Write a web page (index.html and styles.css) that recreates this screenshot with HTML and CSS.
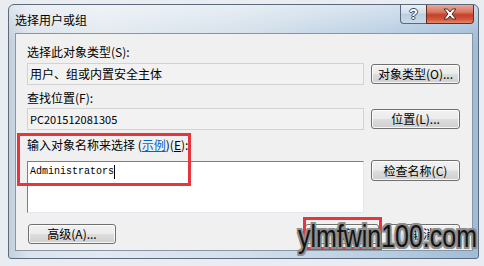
FILE: index.html
```html
<!DOCTYPE html>
<html>
<head>
<meta charset="utf-8">
<link rel="stylesheet" href="styles.css">
</head>
<body>
<div class="window">
  <div class="titlebar">
    <span class="title">选择用户或组</span>
    <div class="caption">
      <span class="cap help"><span class="q">?</span></span>
      <span class="cap close">
        <svg width="16" height="12" viewBox="0 0 16 12"><path d="M2 1 L5.5 1 L8 4 L10.5 1 L14 1 L10 6 L14 11 L10.5 11 L8 8 L5.5 11 L2 11 L6 6 Z" fill="#fff" stroke="#4a2a22" stroke-width="1" stroke-linejoin="round"/></svg>
      </span>
    </div>
  </div>
  <div class="client">
    <div class="label">选择此对象类型(S):</div>
    <div class="field">用户、组或内置安全主体</div>
    <button class="btn side">对象类型(O)...</button>

    <div class="label l2">查找位置(F):</div>
    <div class="field f2 num">PC201512081305</div>
    <button class="btn side">位置(L)...</button>

    <div class="label l3">输入对象名称来选择 (<span class="link">示例</span>)(<u>E</u>):</div>
    <div class="textarea"><span class="mono">Administrators</span><span class="caret"></span></div>
    <button class="btn side top">检查名称(C)</button>

    <div class="bottom">
      <button class="btn adv">高级(A)...</button>
      <div class="okcancel">
        <button class="btn dlg">确定</button>
        <button class="btn dlg">取消</button>
      </div>
    </div>
  </div>
</div>
<div class="mark mark1"></div>
<div class="mark mark2"></div>
<div class="wm">ylmfwin100.com</div>
</body>
</html>
```
FILE: styles.css
```css
html, body {
  margin: 0;
  padding: 0;
}
body {
  background: #e9edf1;
  width: 484px;
  height: 266px;
  position: relative;
  overflow: hidden;
  font-family: "Noto Sans CJK SC", "Liberation Sans", sans-serif;
  font-size: 12px;
  color: #000;
}
.window {
  box-sizing: border-box;
  margin: 4px 0 0 8px;
  width: 471px;
  height: 255px;
  border: 1px solid #5c6b7c;
  border-radius: 6px 6px 3px 3px;
  padding: 0 5px 7px 6px;
  display: flex;
  flex-direction: column;
  background:
    linear-gradient(180deg, rgba(255,255,255,0.45) 0px, rgba(255,255,255,0.1) 26px, rgba(255,255,255,0) 40px),
    linear-gradient(90deg, #c3cfdc 0%, #dbe3ec 4%, #e2e9f0 20%, #d3dfea 50%, #b7cde2 80%, #9fbcd8 100%);
}
.titlebar {
  height: 28px;
  display: flex;
  justify-content: space-between;
  align-items: flex-start;
}
.title {
  margin-top: 6px;
  line-height: 18px;
  font-size: 12px;
  color: #000;
}
.caption {
  display: flex;
  margin-right: -1px;
}
.cap {
  height: 18px;
  display: flex;
  align-items: center;
  justify-content: center;
  border: 1px solid #5a6a7c;
  border-top: none;
}
.help {
  width: 25px;
  border-radius: 0 0 0 4px;
  border-right: none;
  background: linear-gradient(180deg, #e7eef5 0%, #d3dfea 45%, #bccfe0 50%, #c9dbea 100%);
}
.q {
  font-family: "Liberation Sans", sans-serif;
  font-weight: bold;
  font-size: 14px;
  line-height: 14px;
  color: #fff;
  text-shadow: 1px 0 0 #3d4b5a, -1px 0 0 #3d4b5a, 0 1px 0 #3d4b5a, 0 -1px 0 #3d4b5a;
}
.close {
  width: 46px;
  border-radius: 0 0 4px 0;
  border-color: #6b2b20;
  background: linear-gradient(180deg, #e9a89a 0%, #d8745f 40%, #c5402a 55%, #d4573f 80%, #e48a6e 100%);
}
.client {
  box-sizing: border-box;
  height: 218px;
  border: 1px solid #8895a4;
  background: #f0f0f0;
  padding: 11px 12px 0 11px;
  display: grid;
  grid-template-columns: 337px 89px;
  column-gap: 7px;
  align-content: start;
}
.label {
  grid-column: 1 / -1;
  height: 14px;
  line-height: 14px;
  white-space: nowrap;
}
.l2 { margin-top: 6px; }
.l3 { margin-top: 8px; }
.link {
  color: #0066cc;
  text-decoration: underline;
}
.field {
  grid-column: 1;
  box-sizing: border-box;
  height: 22px;
  margin-top: 4px;
  border: 1px solid #d2d2d2;
  background: #f2f2f2;
  padding-left: 2px;
  line-height: 20px;
  color: #000;
}
.f2 { margin-top: 3px; }
.num { font-size: 11px; }
.textarea {
  grid-column: 1;
  box-sizing: border-box;
  height: 52px;
  margin-top: 9px;
  background: #fff;
  border: 1px solid;
  border-color: #7e7e7e #e3e6ea #e3e9ef #7e7e7e;
  padding: 2px 0 0 2px;
  display: flex;
  align-items: flex-start;
}
.mono {
  font-family: "Liberation Mono", monospace;
  font-size: 10px;
  line-height: 14px;
  margin-top: 1px;
}
.caret {
  width: 1px;
  height: 14px;
  background: #000;
  margin-top: 1px;
}
.btn {
  box-sizing: border-box;
  height: 20px;
  padding: 0;
  border: 1px solid #707070;
  border-radius: 3px;
  background: linear-gradient(180deg, #f2f2f2 0%, #ebebeb 48%, #dddddd 52%, #cfcfcf 100%);
  box-shadow: inset 0 0 0 1px rgba(255,255,255,0.8);
  font-family: "Noto Sans CJK SC", "Liberation Sans", sans-serif;
  font-size: 12px;
  line-height: 18px;
  color: #000;
  white-space: nowrap;
}
.side {
  grid-column: 2;
  width: 89px;
  align-self: end;
  margin-bottom: 1px;
}
.side.top {
  align-self: start;
  margin-top: 8px;
  margin-bottom: 0;
  height: 21px;
}
.bottom {
  grid-column: 1 / -1;
  margin-top: 11px;
  display: flex;
  justify-content: space-between;
}
.adv {
  width: 88px;
  margin-left: 1px;
}
.okcancel {
  display: flex;
  gap: 7px;
}
.dlg {
  width: 74px;
}
.mark {
  position: absolute;
  border: 3px solid #e5353d;
  box-sizing: border-box;
}
.mark1 {
  left: 17px;
  top: 133px;
  width: 174px;
  height: 53px;
}
.mark2 {
  left: 303px;
  top: 217px;
  width: 79px;
  height: 33px;
}
.wm {
  position: absolute;
  left: 298px;
  top: 218px;
  font-family: "Liberation Sans", sans-serif;
  font-size: 32px;
  line-height: 36px;
  color: #141414;
  white-space: nowrap;
  transform: scaleX(0.78);
  transform-origin: 0 0;
  text-shadow:
    2px 0 0 #8e8e8e, -2px 0 0 #8e8e8e, 0 2px 0 #8e8e8e, 0 -2px 0 #8e8e8e,
    2px 2px 0 #8e8e8e, -2px -2px 0 #8e8e8e, 2px -2px 0 #8e8e8e, -2px 2px 0 #8e8e8e,
    0 0 3px #9a9a9a;
}
```
